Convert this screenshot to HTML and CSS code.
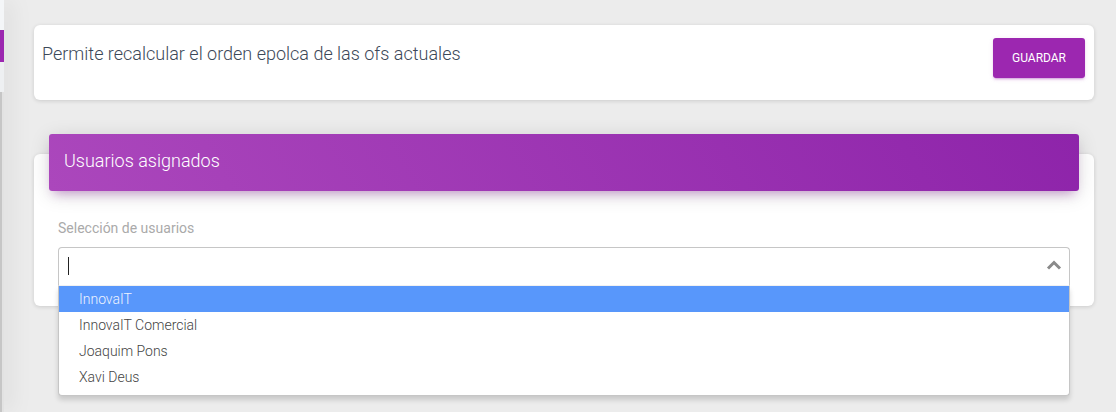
FILE: index.html
```html
<!DOCTYPE html>
<html lang="es">
<head>
<meta charset="utf-8">
<title>Usuarios asignados</title>
<link rel="stylesheet" href="styles.css">
</head>
<body>
<div class="layout">
  <aside class="sidebar">
    <div class="sb-top"></div>
    <div class="sb-active"></div>
    <div class="sb-gap"></div>
    <div class="sb-scroll"></div>
  </aside>
  <main class="main">
    <section class="card card-info">
      <p class="info-text">Permite recalcular el orden epolca de las ofs actuales</p>
      <button class="btn-primary" type="button">Guardar</button>
    </section>
    <section class="card card-users">
      <header class="card-header">
        <h4 class="card-title">Usuarios asignados</h4>
      </header>
      <div class="card-body">
        <label class="field-label">Selección de usuarios</label>
        <div class="select-wrap">
          <div class="select-box">
            <span class="caret-cursor"></span>
            <svg class="chevron" width="16" height="12" viewBox="0 0 16 12"><path d="M2 9.5 L8 3.5 L14 9.5" fill="none" stroke="#8a8a8a" stroke-width="3"/></svg>
          </div>
          <ul class="dropdown">
            <li class="option highlighted">InnovaIT</li>
            <li class="option">InnovaIT Comercial</li>
            <li class="option">Joaquim Pons</li>
            <li class="option">Xavi Deus</li>
          </ul>
        </div>
      </div>
    </section>
  </main>
</div>
</body>
</html>
```

FILE: styles.css
```css
* { box-sizing: border-box; }
html, body { margin: 0; padding: 0; }
body {
  background: #ececec;
  font-family: Roboto, "Liberation Sans", sans-serif;
  width: 1116px;
  height: 412px;
  overflow: hidden;
}
.layout {
  display: flex;
  height: 412px;
}
.sidebar {
  width: 4px;
  flex: none;
  display: flex;
  flex-direction: column;
  background: #f4f6f8;
  position: relative;
  z-index: 2;
  box-shadow: 3px 0 22px rgba(0, 0, 0, 0.22);
}
.sb-top { height: 30px; background: #f4f6f8; }
.sb-active { height: 32px; background: #9c27b0; }
.sb-gap { height: 30px; background: #eef0f2; }
.sb-scroll {
  flex: 1;
  background: linear-gradient(to right, #c6c6c6 0, #c6c6c6 2px, #e2e2e2 2px);
}
.main {
  flex: 1;
  padding: 25px 22px 0 30px;
}
.card {
  background: #fff;
  border-radius: 6px;
  box-shadow: 0 1px 4px rgba(0, 0, 0, 0.14);
}
.card-info {
  height: 75px;
  display: flex;
  justify-content: space-between;
  align-items: flex-start;
  padding: 13px 9px 0 8px;
}
.info-text {
  margin: 0;
  padding-top: 4px;
  font-size: 18px;
  line-height: 24px;
  font-weight: 300;
  color: #3c4858;
}
.btn-primary {
  width: 92px;
  height: 40px;
  border: 0;
  border-radius: 3px;
  background: #9c27b0;
  color: #fff;
  font-family: Roboto, "Liberation Sans", sans-serif;
  font-size: 12px;
  text-transform: uppercase;
  box-shadow: 0 2px 2px 0 rgba(156, 39, 176, 0.14), 0 3px 1px -2px rgba(156, 39, 176, 0.2), 0 1px 5px 0 rgba(156, 39, 176, 0.12);
}
.card-users {
  margin-top: 54px;
  height: 152px;
  position: relative;
}
.card-header {
  margin: 0 15px;
  position: relative;
  top: -20px;
  height: 57px;
  padding: 15px 15px 0;
  border-radius: 3px;
  background: linear-gradient(60deg, #ab47bc, #8e24aa);
  box-shadow: 0 4px 20px 0 rgba(0, 0, 0, 0.14), 0 7px 10px -5px rgba(156, 39, 176, 0.4);
}
.card-title {
  margin: 0;
  font-size: 18px;
  line-height: 24px;
  font-weight: 300;
  color: #fff;
}
.card-body {
  padding: 27px 24px 0;
  margin-top: -20px;
}
.field-label {
  display: block;
  font-size: 14px;
  line-height: 20px;
  color: #aaa;
  margin-bottom: 9px;
}
.select-wrap {
  position: relative;
}
.select-box {
  height: 39px;
  border: 1px solid #c6c6c6;
  border-bottom-color: #f2f2f2;
  border-radius: 4px 4px 0 0;
  display: flex;
  align-items: center;
  justify-content: space-between;
  padding: 0 7px 2px 9px;
  background: #fff;
}
.caret-cursor {
  width: 1px;
  height: 18px;
  background: #222;
}
.chevron { display: block; margin-bottom: 1px; }
.dropdown {
  position: absolute;
  left: 0;
  right: 0;
  top: 39px;
  margin: 0;
  padding: 0 0 5px;
  list-style: none;
  background: #fff;
  border: 1px solid #c6c6c6;
  border-top: 0;
  border-radius: 0 0 4px 4px;
  box-shadow: 0 4px 5px rgba(0, 0, 0, 0.15);
  z-index: 5;
}
.option {
  height: 26px;
  line-height: 26px;
  padding-left: 20px;
  font-size: 14px;
  font-weight: 300;
  color: #444;
}
.option.highlighted {
  background: #5897fb;
  color: #eef3ff;
}
```
